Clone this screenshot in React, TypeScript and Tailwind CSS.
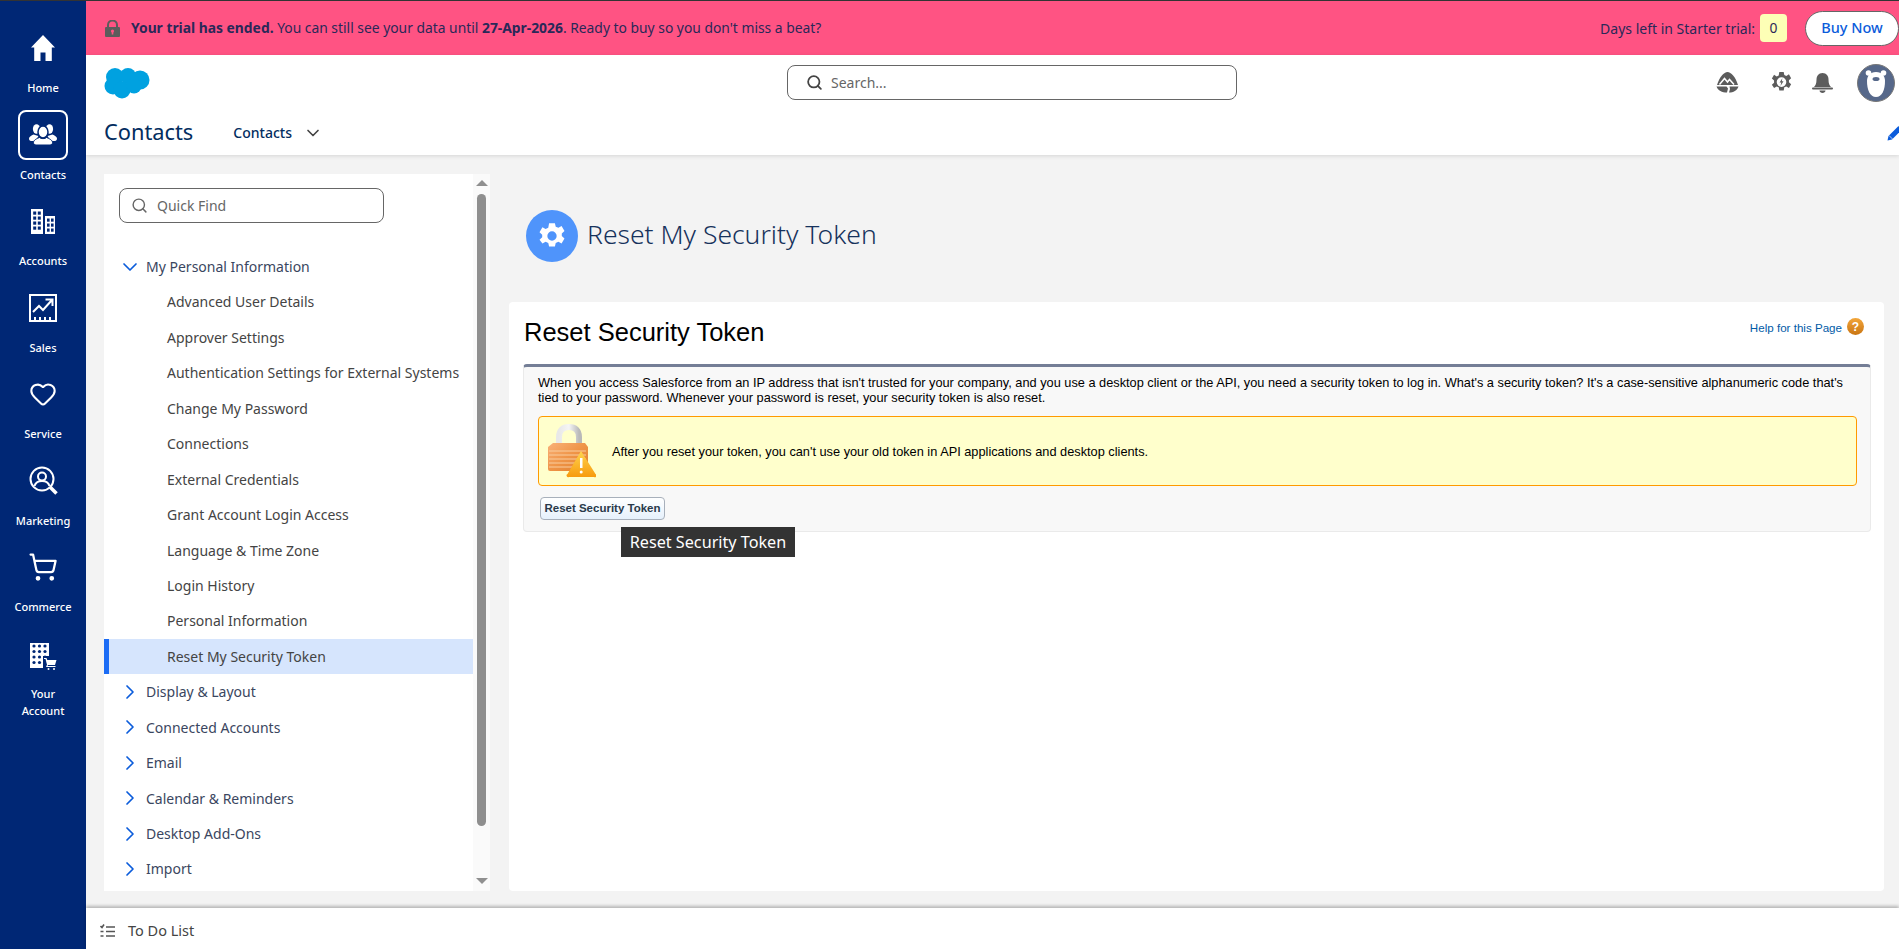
import { ChevronDown, ChevronRight, Heart, Search, ShoppingCart } from 'lucide-react';

const uiFont = "font-['Noto_Sans',sans-serif]";
const sfFont = "font-['Liberation_Sans',Arial,sans-serif]";

const HomeIcon = () => (
  <svg viewBox="0 0 26 28" className="h-[28px] w-[26px]" fill="white">
    <path d="M13 1 1 13.5h3.2V27h6.3v-8.5h5V27h6.3V13.5H25z" />
  </svg>
);

const ContactsIcon = () => (
  <svg viewBox="0 0 28 21" className="h-[21px] w-[28px]" fill="white">
    <ellipse cx="7.500" cy="5" rx="3.600" ry="4.800" />
    <ellipse cx="20.500" cy="5" rx="3.600" ry="4.800" />
    <path d="M0 14.500c0-2 2.500-3 4.500-4l5 1.500-3 5H2c-1.200 0-2-1-2-2.500zM28 14.500c0-2-2.500-3-4.500-4l-5 1.500 3 5H26c1.200 0 2-1 2-2.500z" />
    <ellipse cx="14" cy="8" rx="5" ry="6" stroke="#002775" strokeWidth="1.500" />
    <path d="M4.500 18.500c0-2.500 3.500-4 6-5 1 1.500 6 1.500 7 0 2.500 1 6 2.500 6 5 0 1.500-1 2.500-2.500 2.500H7c-1.500 0-2.500-1-2.500-2.500z" stroke="#002775" strokeWidth="1" />
  </svg>
);

const AccountsIcon = () => (
  <svg viewBox="0 0 24 25" className="h-[25px] w-[24px]">
    <path fill="white" d="M0 0h12v25H0zM14 7h10v18H14z" />
    <g fill="#002775">
      {[2.500, 7.500, 12.500, 17.500].map((y) => (
        <g key={y}>
          <rect x="2.200" y={y} width="3" height="3.200" />
          <rect x="6.800" y={y} width="3" height="3.200" />
        </g>
      ))}
      {[9.500, 14.500, 19.500].map((y) => (
        <g key={y}>
          <rect x="16" y={y} width="2.600" height="3.200" />
          <rect x="20" y={y} width="2.600" height="3.200" />
        </g>
      ))}
    </g>
  </svg>
);

const SalesIcon = () => (
  <svg viewBox="0 0 28 28" className="h-[28px] w-[28px]" fill="none" stroke="white" strokeWidth="2">
    <rect x="1" y="1" width="26" height="26" />
    <path d="M4 18l6-6 4 4 9-10M16.500 5.500h7V12" />
    <path d="M6 27v-4M11 27v-4M16 27v-4M21 27v-4" />
  </svg>
);

const MarketingIcon = () => (
  <svg viewBox="0 0 29 29" className="h-[29px] w-[29px]" fill="none" stroke="white" strokeWidth="2">
    <circle cx="13" cy="13" r="11.500" />
    <circle cx="13" cy="10.500" r="4" />
    <path d="M5.500 20c1-3.500 4-5 7.500-5s6.500 1.500 7.500 5" />
    <path d="M21 21l6.500 6.500" strokeWidth="3.500" />
  </svg>
);

const YourAccountIcon = () => (
  <svg viewBox="0 0 27 27" className="h-[27px] w-[27px]">
    <rect x="0" y="0" width="19" height="25" fill="white" />
    <g fill="#002775">
      {[3, 8.500, 14, 19.500].map((y) => (
        <g key={y}>
          <circle cx="4" cy={y} r="1.600" />
          <circle cx="9.500" cy={y} r="1.600" />
          <circle cx="15" cy={y} r="1.600" />
        </g>
      ))}
      <rect x="13" y="13" width="14" height="14" />
    </g>
    <path fill="white" d="M14 15h2.500l.8 2h9.200l-1.500 5h-7l-.5 1h8v1h-9.500l1-2.300L15.500 16H14z" />
    <circle cx="18.500" cy="26" r="1" fill="white" />
    <circle cx="24" cy="26" r="1" fill="white" />
  </svg>
);

const navItems = [
  { label: 'Home', icon: <HomeIcon /> },
  { label: 'Contacts', icon: <ContactsIcon />, active: true },
  { label: 'Accounts', icon: <AccountsIcon /> },
  { label: 'Sales', icon: <SalesIcon /> },
  { label: 'Service', icon: <Heart className="h-[28px] w-[30px] text-white" strokeWidth={1.800} /> },
  { label: 'Marketing', icon: <MarketingIcon /> },
  { label: 'Commerce', icon: <ShoppingCart className="h-[30px] w-[30px] text-white" strokeWidth={1.800} /> },
  { label: 'Your Account', icon: <YourAccountIcon />, twoLines: true },
];

const personalItems = [
  'Advanced User Details',
  'Approver Settings',
  'Authentication Settings for External Systems',
  'Change My Password',
  'Connections',
  'External Credentials',
  'Grant Account Login Access',
  'Language & Time Zone',
  'Login History',
  'Personal Information',
];

const otherGroups = ['Display & Layout', 'Connected Accounts', 'Email', 'Calendar & Reminders', 'Desktop Add-Ons', 'Import'];

function SideNav() {
  return (
    <nav className="flex w-[86px] shrink-0 flex-col items-center bg-[#002775] pt-[22px] text-white">
      {navItems.map((item) => (
        <div key={item.label} className={`flex h-[86.5px] w-full shrink-0 flex-col items-center ${item.twoLines ? 'pt-[3px]' : ''}`}>
          <div className={`flex h-[50px] w-[50px] shrink-0 items-center justify-center rounded-lg ${item.active ? 'border-2 border-white' : ''}`}>
            {item.icon}
          </div>
          <div className={`w-[60px] text-center text-[11px] font-medium leading-[17px] ${item.twoLines ? 'mt-[3px]' : 'mt-[6px]'} ${uiFont}`}>{item.label}</div>
        </div>
      ))}
    </nav>
  );
}

function TrialBanner() {
  return (
    <div className={`flex h-[54px] shrink-0 items-center bg-[#ff5383] pl-[19px] text-[13.85px] text-[#2a2858] ${uiFont}`}>
      <svg viewBox="0 0 15 17" className="h-[17px] w-[15px]">
        <path d="M3 8V5a4.500 4.500 0 0 1 9 0v3" fill="none" stroke="#5c5c5c" strokeWidth="2" />
        <rect x="0" y="7" width="15" height="10" rx="1" fill="#5c5c5c" />
        <circle cx="7.500" cy="11" r="1.600" fill="#ff5383" />
        <rect x="6.700" y="11" width="1.600" height="3.500" fill="#ff5383" />
      </svg>
      <p className="ml-[11px]">
        <span className="font-bold">Your trial has ended.</span> You can still see your data until{' '}
        <span className="font-bold">27-Apr-2026</span>. Ready to buy so you don't miss a beat?
      </p>
      <span className="ml-auto text-[14px]">Days left in Starter trial:</span>
      <span className="ml-[5px] flex h-[28px] w-[27px] items-center justify-center rounded-[4px] bg-[#fdffb6]">0</span>
      <button className="ml-[18px] h-[35px] w-[94px] rounded-l-full rounded-r-full border border-[#666] bg-white text-[14.5px] font-medium text-[#0b5cdb]">
        Buy Now
      </button>
    </div>
  );
}

function TopHeader() {
  return (
    <header className="relative z-10 h-[100px] shrink-0 bg-white shadow-[0_1px_4px_rgba(0,0,0,0.12)]">
      <div className="flex h-[55px] items-center pl-[18px]">
        <svg viewBox="0 0 46 32" className="h-[32px] w-[46px]" fill="#00a1e0">
          <circle cx="11" cy="10" r="9" />
          <circle cx="24" cy="9" r="8" />
          <circle cx="36" cy="13" r="9.500" />
          <circle cx="9" cy="19" r="8.500" />
          <circle cx="18" cy="23" r="8.500" />
          <circle cx="30" cy="19" r="7.500" />
        </svg>
        <div className={`ml-[637px] flex h-[35px] w-[450px] items-center rounded-lg border border-[#666] pl-[18px] text-[14px] text-[#666] ${uiFont}`}>
          <Search className="h-[17px] w-[17px] text-[#444]" strokeWidth={2.500} />
          <span className="ml-[8px]">Search...</span>
        </div>
        <div className="ml-auto flex items-center pr-[4px]">
          <svg viewBox="0 0 23 21" className="h-[21px] w-[23px]" fill="#5c5c5c">
            <path d="M11.500 0C8 0 3.500 5 1 13h21C19.500 5 15 0 11.500 0z" />
            <path d="M3.500 12.500l5-6 3 3.500 2-2.500 4.500 5" fill="none" stroke="white" strokeWidth="1.500" />
            <path d="M.5 14.500h10l1.500 2-1 4C6 20.500 2 18.500.5 14.500zM13.500 14.500h9c-1.500 4-5 6-9.500 6l1-3.500z" />
          </svg>
          <svg viewBox="0 0 24 24" className="ml-[32px] h-[21px] w-[21px]" fill="#5c5c5c">
            <path fillRule="evenodd" d="M9.500 0h5l.7 3.500 2.300 1 3-1.800 2.500 4.300-2.500 2.300v2.400l2.500 2.300-2.500 4.300-3-1.800-2.300 1-.7 3.500h-5l-.7-3.500-2.300-1-3 1.800L1 14.500l2.500-2.300V9.800L1 7.500l2.500-4.300 3 1.800 2.300-1zM12 6a5.500 5.500 0 1 0 0 11 5.500 5.500 0 0 0 0-11z" />
            <path d="M13 7l-3.200 5h2l-1 4 3.500-5.500h-2z" />
          </svg>
          <svg viewBox="0 0 21 20" className="ml-[20px] h-[20px] w-[21px]" fill="#5c5c5c">
            <path d="M10.500 0c-4 0-6 3-6 6.500 0 4-1 6-2.500 7.500h17c-1.500-1.500-2.500-3.500-2.500-7.500 0-3.500-2-6.500-6-6.500z" />
            <rect x="0" y="14.500" width="21" height="2" rx="1" />
            <path d="M7.500 17.500h6c0 1.500-1.500 2.500-3 2.500s-3-1-3-2.500z" />
          </svg>
          <svg viewBox="0 0 38 38" className="ml-[24px] h-[38px] w-[38px]">
            <circle cx="19" cy="19" r="18.500" fill="#56688a" stroke="#777" />
            <circle cx="11.500" cy="9" r="2.800" fill="white" />
            <circle cx="26.500" cy="9" r="2.800" fill="white" />
            <path d="M19 8c6 0 9 4 9 9 0 9-3 16-9 16s-9-7-9-16c0-5 3-9 9-9z" fill="white" />
            <ellipse cx="19" cy="15" rx="3.500" ry="2" fill="#56688a" />
          </svg>
        </div>
      </div>
      <div className={`flex h-[45px] items-center pl-[18px] ${uiFont}`}>
        <h1 className="text-[21.8px] text-[#032d60]">Contacts</h1>
        <span className="ml-[40px] text-[14px] font-medium text-[#032d60]">Contacts</span>
        <ChevronDown className="ml-[11px] h-[20px] w-[20px] text-[#444]" strokeWidth={2} />
        <svg viewBox="0 0 16 16" className="ml-auto -mr-[4px] h-[16px] w-[16px]" fill="#0b5cdb">
          <path d="M11.500 1l3.500 3.500L5 14.500 .5 15.500l1-4.500z" />
          <path d="M2 10.500 5.500 14" stroke="white" strokeWidth="0.700" />
        </svg>
      </div>
    </header>
  );
}

function SetupMenu() {
  return (
    <aside className={`flex h-[717px] w-[386px] shrink-0 bg-white ${uiFont}`}>
      <div className="min-w-0 flex-1">
        <div className="ml-[15px] mt-[14px] flex h-[35px] w-[265px] items-center rounded-lg border border-[#666] pl-[11px] text-[14px] text-[#666]">
          <Search className="h-[17px] w-[17px]" strokeWidth={2} />
          <span className="ml-[9px]">Quick Find</span>
        </div>
        <ul className="mt-[26px] text-[14px] leading-[35.44px]">
          <li className="flex h-[35.44px] items-center pl-[14px] text-[#3a4660]">
            <ChevronDown className="h-[24px] w-[24px] text-[#0b5cdb]" strokeWidth={1.700} />
            <span className="ml-[4px]">My Personal Information</span>
          </li>
          {personalItems.map((item) => (
            <li key={item} className="h-[35.44px] whitespace-nowrap pl-[63px] text-[#444]">
              {item}
            </li>
          ))}
          <li className="h-[35.44px] border-l-[5px] border-[#1b6cf5] bg-[#d6e5fd] pl-[58px] text-[#444]">Reset My Security Token</li>
          {otherGroups.map((item) => (
            <li key={item} className="flex h-[35.44px] items-center pl-[14px] text-[#3a4660]">
              <ChevronRight className="h-[24px] w-[24px] text-[#0b5cdb]" strokeWidth={1.700} />
              <span className="ml-[4px]">{item}</span>
            </li>
          ))}
        </ul>
      </div>
      <div className="flex w-[17px] shrink-0 flex-col items-center bg-[#fafafa] pt-[6px]">
        <div className="h-0 w-0 border-x-[6px] border-b-[6px] border-x-transparent border-b-[#8f8f8f]" />
        <div className="mt-[8px] h-[632px] w-[9px] rounded-full bg-[#8f8f8f]" />
        <div className="mt-[52px] h-0 w-0 border-x-[6px] border-t-[6px] border-x-transparent border-t-[#8f8f8f]" />
      </div>
    </aside>
  );
}

function LockWarningIcon() {
  return (
    <svg viewBox="0 0 50 54" className="h-[54px] w-[50px]">
      <defs>
        <linearGradient id="lockBody" x1="0" y1="0" x2="1" y2="1">
          <stop offset="0" stopColor="#f9b27a" />
          <stop offset="0.5" stopColor="#ef9447" />
          <stop offset="1" stopColor="#e07f2e" />
        </linearGradient>
        <linearGradient id="lockShackle" x1="0" y1="0" x2="1" y2="0">
          <stop offset="0" stopColor="#e8e8e8" />
          <stop offset="0.5" stopColor="#f5f5f5" />
          <stop offset="1" stopColor="#b9b9b9" />
        </linearGradient>
        <linearGradient id="warnTri" x1="0" y1="0" x2="0" y2="1">
          <stop offset="0" stopColor="#ffd54f" />
          <stop offset="1" stopColor="#f79a0e" />
        </linearGradient>
      </defs>
      <path d="M13 22V13C13 6 17 3 23 3s10 3 10 10v9" fill="none" stroke="url(#lockShackle)" strokeWidth="6" />
      <path d="M7 19h32l3 4v22a2 2 0 0 1-2 2H4a2 2 0 0 1-2-2V23z" fill="url(#lockBody)" />
      <path d="M3 27h37M3 31h37M3 35h37M3 39h37M3 43h37" stroke="#f9cd9e" strokeWidth="1" />
      <path d="M35 27 49.500 50a1.500 1.500 0 0 1-1.500 3H23a1.500 1.500 0 0 1-1.500-3z" fill="url(#warnTri)" />
      <rect x="34" y="34" width="2.500" height="10" fill="white" />
      <circle cx="35.200" cy="48" r="1.500" fill="white" />
    </svg>
  );
}

function TokenCard() {
  return (
    <section className={`min-h-0 flex-1 rounded-[4px] bg-white pl-[14px] pr-[13px] pt-[12px] ${sfFont}`}>
      <div className="flex items-start justify-between pl-[1px] pr-[7px]">
        <h2 className="text-[25.5px] leading-[36px] text-black">Reset Security Token</h2>
        <a className="mt-[5px] flex items-center gap-[5px] text-[11.6px] text-[#015ba7]">
          Help for this Page
          <span className="flex h-[17px] w-[17px] -translate-y-[1px] items-center justify-center rounded-full bg-gradient-to-b from-[#f3a63a] to-[#c9750f] text-[12px] font-bold text-white">?</span>
        </a>
      </div>
      <div className="mt-[14px] h-[168px] rounded-[4px] border border-t-[3px] border-[#eaeaea] border-t-[#747e96] bg-[#f8f8f8] pl-[14px] pr-[13px] pt-[8px] text-[12.78px] leading-[15px] text-black">
        <p>
          When you access Salesforce from an IP address that isn't trusted for your company, and you use a desktop client or the API, you need a security token to log in. What's a security token? It's a case-sensitive alphanumeric code that's tied to your password. Whenever your password is reset, your security token is also reset.
        </p>
        <div className="mt-[11px] flex h-[70px] items-center rounded-[4px] border border-[#ff9a00] bg-[#ffffcc] pl-[7px]">
          <LockWarningIcon />
          <span className="ml-[16px]">After you reset your token, you can't use your old token in API applications and desktop clients.</span>
        </div>
        <button className="ml-[2px] mt-[11px] h-[23px] w-[125px] rounded-[4px] border border-[#a8b0bb] bg-gradient-to-b from-white to-[#e6f1fc] text-[11.5px] font-bold text-[#2a3a4a]">
          Reset Security Token
        </button>
      </div>
    </section>
  );
}

export default function App() {
  return (
    <div className="flex h-screen w-full overflow-hidden border-t border-[#333]">
      <SideNav />
      <div className="flex min-w-0 flex-1 flex-col">
        <TrialBanner />
        <TopHeader />
        <main className="flex min-h-0 flex-1 gap-[19px] bg-[#f3f3f3] pb-[17px] pl-[18px] pr-[15px] pt-[19px]">
          <SetupMenu />
          <div className="relative flex min-w-0 flex-1 flex-col">
            <div className={`flex h-[128px] shrink-0 items-start pl-[17px] pt-[36px] ${uiFont}`}>
              <div className="flex h-[52px] w-[52px] items-center justify-center rounded-full bg-[#4f94fb]">
                <svg viewBox="0 0 24 24" className="h-[28px] w-[28px]" fill="white">
                  <path fillRule="evenodd" d="M9.500 1h5l.7 3 2.300 1 2.700-1.500 2.500 4.300-2.300 2.100v2.200l2.300 2.100-2.500 4.300-2.700-1.500-2.300 1-.7 3h-5l-.7-3-2.300-1-2.700 1.500L1.300 15.200l2.300-2.100v-2.200L1.300 8.800l2.500-4.300L6.500 6l2.300-1zM12 8a4 4 0 1 0 0 8 4 4 0 0 0 0-8z" />
                </svg>
              </div>
              <h1 className="ml-[9px] text-[26.5px] font-light leading-[48px] text-[#16325c]">Reset My Security Token</h1>
            </div>
            <TokenCard />
            <div className={`absolute left-[112px] top-[353px] flex h-[30px] w-[174px] items-center justify-center bg-[#333] text-[16.2px] text-white ${uiFont}`}>
              Reset Security Token
            </div>
          </div>
        </main>
        <footer className={`relative z-10 flex h-[41px] shrink-0 items-center bg-white pl-[14px] pt-[4px] text-[14.5px] text-[#444] shadow-[0_-2px_3px_rgba(0,0,0,0.25)] ${uiFont}`}>
          <svg viewBox="0 0 15 14" className="h-[14px] w-[15px]" fill="none" stroke="#555" strokeWidth="1.600">
            <path d="M.5 2l1.500 1.500L4 .5M6 3h9M6 7.500h9M6 12h9M.5 7.500h3M.5 12h3" />
          </svg>
          <span className="ml-[13px]">To Do List</span>
        </footer>
      </div>
    </div>
  );
}
